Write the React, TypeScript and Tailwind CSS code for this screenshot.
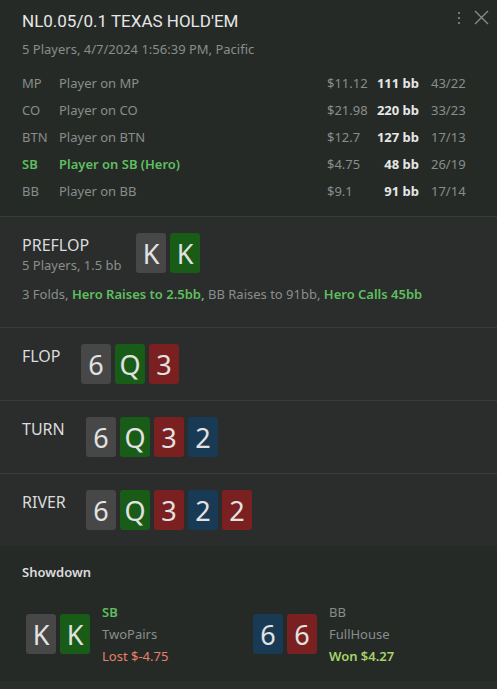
type Suit = "s" | "c" | "h" | "d";

const suitBg: Record<Suit, string> = {
    s: "bg-[#474747]",
    c: "bg-[#185c18]",
    h: "bg-[#7b2020]",
    d: "bg-[#193a55]",
};

const Card = ({ rank, suit }: { rank: string; suit: Suit }) => (
    <div
        className={`flex h-10 w-[30px] items-center justify-center rounded-[3px] text-[27px] leading-none text-[#e2e2e2] ${suitBg[suit]}`}
    >
        {rank}
    </div>
);

const Cards = ({ cards }: { cards: [string, Suit][] }) => (
    <div className="flex gap-1">
        {cards.map(([r, s], i) => (
            <Card key={i} rank={r} suit={s} />
        ))}
    </div>
);

const players = [
    { pos: "MP", name: "Player on MP", money: "$11.12", bb: "111 bb", stats: "43/22" },
    { pos: "CO", name: "Player on CO", money: "$21.98", bb: "220 bb", stats: "33/23" },
    { pos: "BTN", name: "Player on BTN", money: "$12.7", bb: "127 bb", stats: "17/13" },
    { pos: "SB", name: "Player on SB (Hero)", money: "$4.75", bb: "48 bb", stats: "26/19", hero: true },
    { pos: "BB", name: "Player on BB", money: "$9.1", bb: "91 bb", stats: "17/14" },
];

const Street = ({ label, width, cards }: { label: string; width: string; cards: [string, Suit][] }) => (
    <div className="flex items-start border-t border-[#3a3d3c] px-[22px] py-4">
        <div className={`pt-[2px] text-[16px] leading-5 text-[#dcdcdc] ${width}`}>{label}</div>
        <Cards cards={cards} />
    </div>
);

export default function App() {
    return (
        <div className="flex h-[689px] w-[497px] flex-col overflow-hidden bg-[#2a2d2c] font-['Noto_Sans',sans-serif] text-[13px]">
            <div className="bg-[#252a27] px-[22px] pt-[9px] pb-[17px]">
                <div className="flex items-start justify-between">
                    <h1 className="font-['Roboto',sans-serif] text-[17px] leading-6 text-[#e6e6e6]">NL0.05/0.1 TEXAS HOLD'EM</h1>
                    <div className="-mr-[14px] flex items-center gap-[13px] pt-[1px] text-[#8a8d8b]">
                        <svg width="4" height="14" viewBox="0 0 4 14" fill="currentColor">
                            <circle cx="2" cy="2" r="1.1" />
                            <circle cx="2" cy="7" r="1.1" />
                            <circle cx="2" cy="12" r="1.1" />
                        </svg>
                        <svg width="15" height="15" viewBox="0 0 15 15" stroke="currentColor" strokeWidth="1.3" fill="none">
                            <path d="M1 1L14 14M14 1L1 14" />
                        </svg>
                    </div>
                </div>
                <div className="mt-[8px] leading-4 text-[#8a8d8b]">5 Players, 4/7/2024 1:56:39 PM, Pacific</div>
                <div className="mt-[18px] flex flex-col gap-[11px]">
                    {players.map((p) => (
                        <div key={p.pos} className="flex h-4 items-center leading-4">
                            <span className={`w-[37px] ${p.hero ? "font-semibold text-[#5fbf5f]" : "text-[#8a8d8b]"}`}>{p.pos}</span>
                            <span className={`flex-1 ${p.hero ? "font-semibold text-[#5fbf5f]" : "text-[#8a8d8b]"}`}>{p.name}</span>
                            <span className="w-[46px] text-[#8a8d8b]">{p.money}</span>
                            <span className="w-[46px] text-right font-bold text-[#e6e6e6]">{p.bb}</span>
                            <span className="w-[56px] pl-[12px] text-[#8a8d8b]">{p.stats}</span>
                        </div>
                    ))}
                </div>
            </div>

            <div className="border-t border-[#3a3d3c] px-[22px] pt-4 pb-[25px]">
                <div className="flex items-start">
                    <div className="w-[114px] pt-[2px]">
                        <div className="text-[16px] leading-5 text-[#dcdcdc]">PREFLOP</div>
                        <div className="mt-[2px] leading-4 text-[#8a8d8b]">5 Players, 1.5 bb</div>
                    </div>
                    <Cards cards={[["K", "s"], ["K", "c"]]} />
                </div>
                <div className="mt-[13px] leading-4 text-[#8a8d8b]">
                    3 Folds, <span className="font-semibold text-[#5fbf5f]">Hero Raises to 2.5bb,</span> BB Raises to 91bb,{" "}
                    <span className="font-semibold text-[#5fbf5f]">Hero Calls 45bb</span>
                </div>
            </div>

            <Street label="FLOP" width="w-[59px]" cards={[["6", "s"], ["Q", "c"], ["3", "h"]]} />
            <Street label="TURN" width="w-[64px]" cards={[["6", "s"], ["Q", "c"], ["3", "h"], ["2", "d"]]} />
            <Street label="RIVER" width="w-[64px]" cards={[["6", "s"], ["Q", "c"], ["3", "h"], ["2", "d"], ["2", "h"]]} />

            <div className="bg-[#252a27] px-[22px] pt-[18px] pb-[17px]">
                <div className="font-semibold leading-4 text-[#dcdcdc]">Showdown</div>
                <div className="mt-[24px] flex">
                    <div className="flex w-[231px] items-center gap-3 pl-1">
                        <Cards cards={[["K", "s"], ["K", "c"]]} />
                        <div className="flex flex-col gap-[6px] leading-4">
                            <span className="font-semibold text-[#5fbf5f]">SB</span>
                            <span className="text-[#8a8d8b]">TwoPairs</span>
                            <span className="text-[#e8806a]">Lost $-4.75</span>
                        </div>
                    </div>
                    <div className="flex items-center gap-3">
                        <Cards cards={[["6", "d"], ["6", "h"]]} />
                        <div className="flex flex-col gap-[6px] leading-4">
                            <span className="text-[#8a8d8b]">BB</span>
                            <span className="text-[#8a8d8b]">FullHouse</span>
                            <span className="font-semibold text-[#a6d36a]">Won $4.27</span>
                        </div>
                    </div>
                </div>
            </div>
            <div className="flex-1 bg-[#2a2d2c]" />
        </div>
    );
}
